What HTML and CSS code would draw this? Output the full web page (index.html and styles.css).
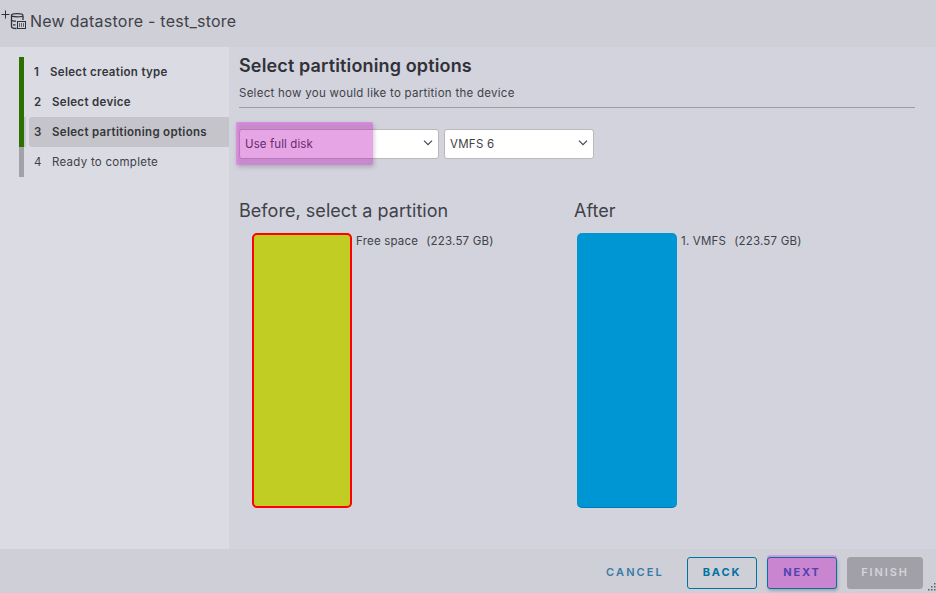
FILE: index.html
```html
<!DOCTYPE html>
<html lang="en">
  <head>
    <meta charset="UTF-8" />
    <title>New datastore - test_store</title>
    <link rel="stylesheet" href="styles.css">
  </head>
  <body>
    <header class="header">
      <svg class="store-icon" width="28" height="24" viewBox="0 0 28 24">
        <path d="M1.5 5.5h8M5.5 1.5v8" />
        <path d="M11.5 7v10.5c0 1.5 2 2 5 2M23 7v4" stroke-width="1.3" />
        <ellipse cx="17.2" cy="6.3" rx="5.8" ry="1.6" stroke-width="1.2" />
        <path d="M12 11.4c1 .6 2 .8 4 .8M13 15.8h2.5" stroke-width="1.2" />
        <rect x="17.5" y="12.5" width="8" height="7" />
        <path d="M19.5 14v4M21.5 14v4M23.5 14v4" stroke-width="0.7" />
      </svg>
      <h1>New datastore - test_store</h1>
    </header>

    <div class="wizard">
      <nav class="steps">
        <ul>
          <li class="step done first"><div><b>1</b><span>Select creation type</span></div></li>
          <li class="step done"><div><b>2</b><span>Select device</span></div></li>
          <li class="step done current"><div><b>3</b><span>Select partitioning options</span></div></li>
          <li class="step"><div><b>4</b><span>Ready to complete</span></div></li>
        </ul>
      </nav>

      <main class="content">
        <h2>Select partitioning options</h2>
        <p class="intro">Select how you would like to partition the device</p>

        <div class="selects">
          <div class="select disk">
            <span>Use full disk</span>
            <svg width="10" height="6" viewBox="0 0 10 6"><path d="M1 .7l4 4 4-4" /></svg>
            <div class="marker"></div>
          </div>
          <div class="select version">
            <span>VMFS 6</span>
            <svg width="10" height="6" viewBox="0 0 10 6"><path d="M1 .7l4 4 4-4" /></svg>
          </div>
        </div>

        <div class="layouts">
          <section class="before">
            <h3>Before, select a partition</h3>
            <div class="partition">
              <div class="disk-box free"></div>
              <p><span>Free space</span><span>(223.57 GB)</span></p>
            </div>
          </section>
          <section class="after">
            <h3>After</h3>
            <div class="partition">
              <div class="disk-box vmfs"></div>
              <p><span>1. VMFS</span><span>(223.57 GB)</span></p>
            </div>
          </section>
        </div>
      </main>
    </div>

    <footer class="footer">
      <button class="btn link">CANCEL</button>
      <button class="btn back">BACK</button>
      <button class="btn next">NEXT</button>
      <button class="btn finish" disabled>FINISH</button>
      <svg class="grip" width="9" height="9" viewBox="0 0 9 9">
        <path d="M7 0h1.5v1.5H7zM4 3h1.5v1.5H4zM7 3h1.5v1.5H7zM1 6h1.5v1.5H1zM4 6h1.5v1.5H4zM7 6h1.5v1.5H7z" />
      </svg>
    </footer>
  </body>
</html>
```

FILE: styles.css
```css
* {
  box-sizing: border-box;
}

body {
  margin: 0;
  height: 593px;
  overflow: hidden;
  display: flex;
  flex-direction: column;
  background: #d3d3de;
  color: #404247;
  font-family: Inter, "Open Sans", sans-serif;
  font-size: 11.5px;
  letter-spacing: 0.27px;
}

h1,
h2,
h3,
p,
ul {
  margin: 0;
  padding: 0;
}

.header {
  height: 47px;
  display: flex;
  align-items: flex-start;
  padding-top: 9px;
  background: #cfcfd8;
}

.store-icon {
  fill: none;
  stroke: #303136;
  stroke-width: 1;
}

h1 {
  margin-left: 2px;
  font-size: 16px;
  font-weight: 400;
  line-height: 24px;
  letter-spacing: 0.25px;
}

.wizard {
  flex: 1;
  display: flex;
}

.steps {
  width: 229px;
  padding: 10px 0 0 19px;
  background: #dbdbe4;
}

.steps ul {
  list-style: none;
}

.step {
  height: 30px;
  border-left: 5px solid #a2a2a7;
  padding-left: 5px;
  line-height: 30px;
}

.step div {
  display: flex;
  padding-left: 5px;
}

.step b {
  width: 18px;
  font-weight: inherit;
}

.first b {
  width: 16px;
}

.done {
  border-color: #2d6f00;
  font-weight: 600;
  color: #35373b;
  letter-spacing: 0.32px;
}

.current {
  background: linear-gradient(#c4c4ca, #c4c4ca) no-repeat 0 0 / 2px 30px;
}

.current div {
  background: #c4c4ca;
  border-radius: 3px 0 0 3px;
}

.content {
  flex: 1;
  padding: 5px 21px 0 10px;
}

h2 {
  font-size: 18px;
  font-weight: 600;
  line-height: 28px;
  letter-spacing: 0.14px;
  color: #303237;
}

.intro {
  height: 28px;
  line-height: 27px;
  border-bottom: 1px solid #9d9da7;
}

.selects {
  display: flex;
  gap: 5px;
  margin-top: 21px;
}

.select {
  position: relative;
  height: 30px;
  display: flex;
  align-items: center;
  justify-content: space-between;
  padding: 0 5px;
  background: #fff;
  border: 1px solid #b9b9bc;
  border-radius: 3px;
}

.select svg {
  margin-top: -3px;
  fill: none;
  stroke: #46474b;
  stroke-width: 1.2;
}

.disk {
  width: 200px;
  letter-spacing: 0.1px;
}

.version {
  width: 150px;
}

.marker {
  position: absolute;
  left: -4px;
  top: -8px;
  width: 137px;
  height: 43px;
  border-radius: 2px;
  background: rgba(182, 0, 180, 0.35);
  box-shadow: 1px 2px 4px rgba(70, 70, 90, 0.28), inset 2px 1px 3px rgba(246, 150, 246, 0.5);
}

.layouts {
  display: flex;
  margin-top: 38px;
}

.before {
  width: 335px;
}

h3 {
  font-size: 18px;
  font-weight: 400;
  line-height: 28px;
  letter-spacing: 0.05px;
}

.partition {
  display: flex;
  gap: 4px;
  margin-top: 8px;
  line-height: 16px;
}

.before .partition {
  padding-left: 13px;
}

.after .partition {
  padding-left: 3px;
}

.partition p {
  display: flex;
  gap: 8px;
  letter-spacing: 0.2px;
}

.disk-box {
  width: 100px;
  height: 275px;
  border-radius: 5px;
}

.free {
  background: #c1cd23;
  border: 2px solid #ff0000;
}

.vmfs {
  background: #0095d3;
  border-bottom: 1px solid #0079b8;
}

.footer {
  position: relative;
  height: 44px;
  display: flex;
  align-items: center;
  justify-content: flex-end;
  gap: 10px;
  padding: 3px 13px 0 0;
  background: #cfcfd8;
}

.btn {
  height: 32px;
  padding: 0 0 2px;
  border: 1px solid #0072a3;
  border-radius: 3px;
  background: none;
  color: #0072a3;
  font-family: inherit;
  font-size: 11px;
  font-weight: 700;
  letter-spacing: 1.9px;
}

.link {
  width: 84px;
  border-color: transparent;
  color: #397ba5;
  font-weight: 600;
  letter-spacing: 2.1px;
}

.back,
.next {
  width: 70px;
}

.next {
  background: #c985d0;
  color: #5142b2;
  box-shadow: 0 -2px 0 #d795de, 1px 2px 3px rgba(70, 70, 90, 0.3);
}

.finish {
  width: 76px;
  border-color: #a0a0a6;
  background: #a0a0a6;
  color: #d4d4dc;
  font-weight: 600;
}

.grip {
  position: absolute;
  right: 0;
  bottom: 1px;
  fill: #5d5e64;
}
```
